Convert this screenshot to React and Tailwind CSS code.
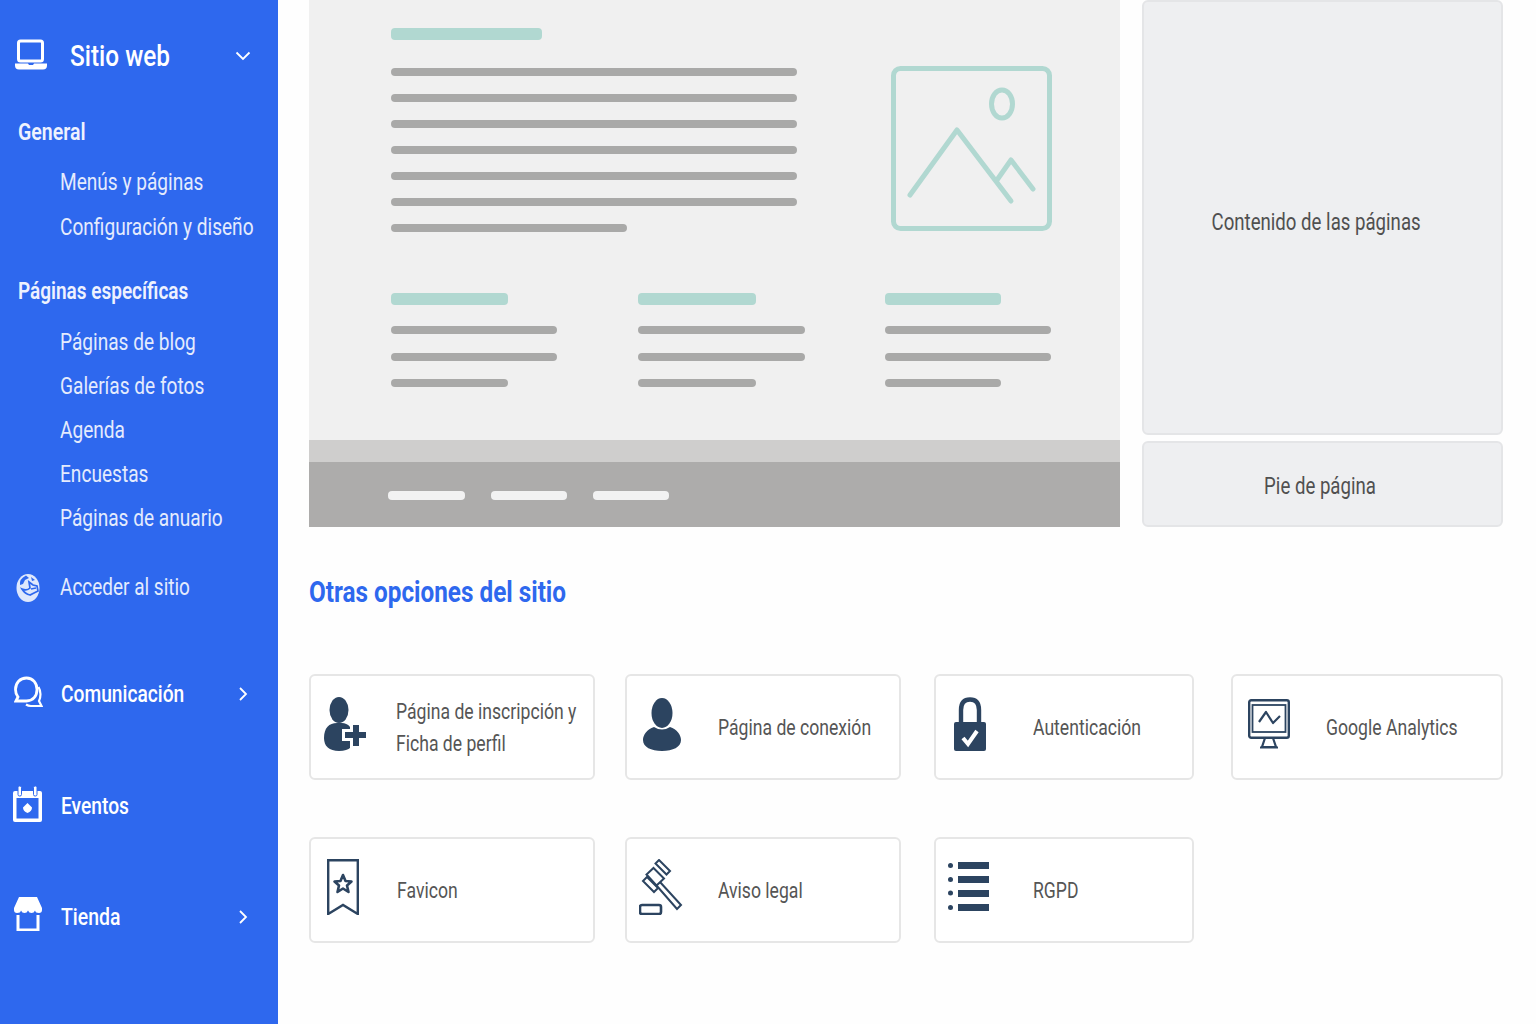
import React from "react";

const NAVY = "#2c4460";

// The reference text is a narrow Roboto, so every label gets squeezed horizontally
const Narrow = ({ className = "scale-x-[0.83]", children }) => (
  <span className={`inline-block whitespace-nowrap origin-left ${className}`}>{children}</span>
);

const ChevronDown = () => (
  <svg width="16" height="16" viewBox="0 0 16 16" fill="none" stroke="white" strokeWidth="1.8">
    <path d="M1.5 4.5 L8 11 L14.5 4.5" />
  </svg>
);

const ChevronRight = () => (
  <svg className="ml-[2px]" width="16" height="16" viewBox="0 0 16 16" fill="none" stroke="white" strokeWidth="1.8">
    <path d="M5 2 L11 8 L5 14" />
  </svg>
);

const LaptopIcon = () => (
  <svg className="mb-[2px]" width="32" height="32" viewBox="0 0 32 32" fill="none">
    <rect x="3.5" y="2" width="24" height="20" rx="2" stroke="white" strokeWidth="3" />
    <path d="M0 24.5 H13 L14 26 H18 L19 24.5 H32 V26.5 Q32 30.5 28 30.5 H4 Q0 30.5 0 26.5 Z" fill="white" />
  </svg>
);

const GlobeIcon = () => (
  <svg width="24" height="30" viewBox="0 0 24 30">
    <ellipse cx="12" cy="15" rx="11.5" ry="14" fill="#dfe8fc" />
    <path d="M10 2.5 L13 5 L9 7 L7 11 L4 12 Q3 6 10 2.5 Z" fill="#2e68ee" />
    <path d="M15 4 L19 7 L16 8 Z" fill="#2e68ee" />
    <path d="M13 9 L17 12 L21 13 L22 18 L18 20 L14 22 Q9 21 6 16 Q11 18 14 15 Z" fill="none" stroke="#2e68ee" strokeWidth="1.7" />
    <path d="M15 16 L20 15" stroke="#2e68ee" strokeWidth="1.5" />
  </svg>
);

const ChatIcon = () => (
  <svg className="mb-[4px]" width="29" height="32" viewBox="0 0 29 32" fill="none" stroke="white" strokeWidth="2.8">
    <path d="M12.5 2 C19 2 23 7 23 13.5 C23 20 19 25 12.5 25 H2 L4 21 C2 18.5 1.5 16 1.5 13.5 C1.5 7 6 2 12.5 2 Z" />
    <path d="M24.5 11 C27 15 27 21 25 25 L27.5 30 H17 C15 30 13.5 29.5 12 28.5" strokeWidth="2.2" />
  </svg>
);

const CalendarIcon = () => (
  <svg className="mb-[4px]" width="29" height="36" viewBox="0 0 29 36">
    <path d="M2 5 H27 Q29 5 29 7 V34 Q29 36 27 36 H2 Q0 36 0 34 V7 Q0 5 2 5 Z" fill="white" />
    <rect x="3.5" y="12" width="22" height="20.5" fill="#2e68ee" />
    <rect x="5" y="0" width="3.5" height="10" rx="1.5" fill="white" stroke="#2e68ee" strokeWidth="1" />
    <rect x="20.5" y="0" width="3.5" height="10" rx="1.5" fill="white" stroke="#2e68ee" strokeWidth="1" />
    <path d="M14.5 17 L19 21.5 Q19 25 14.5 27 Q10 25 10 21.5 Z" fill="white" />
  </svg>
);

const StoreIcon = () => (
  <svg className="mb-[6px]" width="28" height="34" viewBox="0 0 28 34">
    <path d="M5 0 H23 L28 11 V13 Q28 16 25 16 Q21.5 16 21 13.5 Q20 16 17.5 16 Q15 16 14 13.5 Q13 16 10.5 16 Q8 16 7 13.5 Q6.5 16 3 16 Q0 16 0 13 V11 Z" fill="white" />
    <path d="M4 18 V33 H24 V18" fill="none" stroke="white" strokeWidth="3" />
  </svg>
);

const UserPlusIcon = () => (
  <svg className="block" width="44" height="56" viewBox="0 0 44 56">
    <ellipse cx="16" cy="14" rx="9.5" ry="13" fill={NAVY} />
    <path d="M1 42 C1 32 6 27 14 27 H19 C25 27 30 32 31 42 C31 50 27 55 16 55 C6 55 1 50 1 42 Z" fill={NAVY} />
    <path d="M27 26 H38 V33 H44 V44 H38 V54 H27 V45 H19 V33 H27 Z" fill="white" />
    <path d="M30 29 H36 V36 H43 V42 H36 V50 H30 V42 H22 V36 H30 Z" fill={NAVY} />
  </svg>
);

const UserIcon = () => (
  <svg className="block" width="40" height="55" viewBox="0 0 40 55">
    <ellipse cx="20" cy="16" rx="10.5" ry="15" fill={NAVY} />
    <path d="M12 30 Q20 35 28 30 C35 32 39 38 39 43 C39 50 31 54 20 54 C9 54 1 50 1 43 C1 38 5 32 12 30 Z" fill={NAVY} />
  </svg>
);

const LockIcon = () => (
  <svg className="block" width="32" height="55" viewBox="0 0 32 55">
    <path d="M7 26 V13 C7 6 10 2.5 16 2.5 C22 2.5 25 6 25 13 V26" fill="none" stroke={NAVY} strokeWidth="4.4" />
    <rect x="0" y="25" width="32" height="29" rx="2" fill={NAVY} />
    <path d="M9 41 L14 47 L23 34" fill="none" stroke="white" strokeWidth="4" />
  </svg>
);

const MonitorIcon = () => (
  <svg className="block" width="42" height="50" viewBox="0 0 42 50" fill="none" stroke={NAVY}>
    <rect x="1.2" y="1.2" width="39.6" height="37.6" rx="2" strokeWidth="2.4" />
    <rect x="4.5" y="6" width="33" height="27" strokeWidth="1.8" />
    <path d="M11 23 L18 13 L25 24 L32 17" strokeWidth="2.2" strokeLinejoin="round" />
    <path d="M17 39 L14 48 H28 L25 39 M12 48.5 H30" strokeWidth="2.2" />
  </svg>
);

const BookmarkIcon = () => (
  <svg className="block" width="32" height="56" viewBox="0 0 32 56" fill="none" stroke={NAVY}>
    <path d="M1.2 55 V1.2 H30.8 V55 L16 46 Z" strokeWidth="2.4" />
    <path d="M16 16 L18.5 22 L24.5 22.5 L20 26.5 L21.5 33 L16 29.5 L10.5 33 L12 26.5 L7.5 22.5 L13.5 22 Z" strokeWidth="2.6" strokeLinejoin="round" />
  </svg>
);

const GavelIcon = () => (
  <svg className="block" width="44" height="56" viewBox="0 0 44 56" fill="none" stroke={NAVY} strokeWidth="2">
    <path d="M20 1 L31 12 L27.5 15.5 L16.5 4.5 Z" />
    <path d="M8 18 L19 29 L15 33 L4 22 Z" />
    <path d="M14.5 9 L25 19.5 L17.5 26.5 L7.5 15.5 Z" />
    <path d="M21 23 L42 46 L38 50 L17.5 26.5" />
    <rect x="1" y="46" width="21" height="9" rx="2" strokeWidth="2.6" />
  </svg>
);

const ListIcon = () => (
  <svg className="block" width="41" height="50" viewBox="0 0 41 50" fill={NAVY}>
    <circle cx="2.5" cy="3.5" r="2.5" />
    <rect x="10" y="0" width="31" height="7" />
    <circle cx="2.5" cy="17.5" r="2.5" />
    <rect x="10" y="14" width="31" height="7" />
    <circle cx="2.5" cy="31" r="2.5" />
    <rect x="10" y="28" width="31" height="7" />
    <circle cx="2.5" cy="45.5" r="2.5" />
    <rect x="10" y="42" width="31" height="7" />
  </svg>
);

const ImageIcon = () => (
  <svg className="block" width="161" height="165" viewBox="0 0 161 165" fill="none" stroke="#b1d8d1" strokeWidth="5" strokeLinecap="round" strokeLinejoin="round">
    <rect x="2.5" y="2.5" width="156" height="160" rx="7" />
    <ellipse cx="111" cy="38" rx="10.5" ry="14" />
    <path d="M19 129 L66 64 L120 135" />
    <path d="M106 114 L120 94 L142 123" />
  </svg>
);

const sideItem = "flex items-center text-[23px] text-[#e4ebfd]";

const Sidebar = () => (
  <aside className="w-[278px] shrink-0 h-full bg-[#2e68ee] text-white pt-[28px] font-['Roboto',sans-serif] overflow-hidden">
    <div className="flex items-center justify-between h-[56px] pl-[15px] pr-[27px]">
      <div className="flex items-center">
        <LaptopIcon />
        <Narrow className="ml-[23px] mt-[2px] text-[29px] font-medium scale-x-[0.84]">Sitio web</Narrow>
      </div>
      <ChevronDown />
    </div>

    <div className="mt-[33px] h-[32px] flex items-center pl-[18px] text-[23px] font-semibold text-[#eef2fe]">
      <Narrow className="scale-x-[0.85]">General</Narrow>
    </div>
    <div className="mt-[12px] pl-[60px]">
      <div className={`${sideItem} h-[45px]`}><Narrow>Menús y páginas</Narrow></div>
      <div className={`${sideItem} h-[45px]`}><Narrow>Configuración y diseño</Narrow></div>
    </div>

    <div className="mt-[25px] h-[32px] flex items-center pl-[18px] text-[23px] font-semibold text-[#eef2fe]">
      <Narrow className="scale-x-[0.825]">Páginas específicas</Narrow>
    </div>
    <div className="mt-[13px] pl-[60px]">
      <div className={`${sideItem} h-[44px]`}><Narrow>Páginas de blog</Narrow></div>
      <div className={`${sideItem} h-[44px]`}><Narrow>Galerías de fotos</Narrow></div>
      <div className={`${sideItem} h-[44px]`}><Narrow>Agenda</Narrow></div>
      <div className={`${sideItem} h-[44px]`}><Narrow>Encuestas</Narrow></div>
      <div className={`${sideItem} h-[44px]`}><Narrow>Páginas de anuario</Narrow></div>
    </div>

    <div className={`${sideItem} h-[44px] mt-[25px] pl-[16px]`}>
      <GlobeIcon />
      <Narrow className="ml-[20px] scale-x-[0.825]">Acceder al sitio</Narrow>
    </div>

    <div className="mt-[62px] h-[44px] flex items-center justify-between pl-[14px] pr-[27px]">
      <div className="flex items-center">
        <ChatIcon />
        <Narrow className="ml-[18px] text-[24px] font-medium scale-x-[0.8]">Comunicación</Narrow>
      </div>
      <ChevronRight />
    </div>

    <div className="mt-[68px] h-[44px] flex items-center pl-[13px]">
      <CalendarIcon />
      <Narrow className="ml-[19px] text-[24px] font-medium scale-x-[0.8]">Eventos</Narrow>
    </div>

    <div className="mt-[67px] h-[44px] flex items-center justify-between pl-[14px] pr-[27px]">
      <div className="flex items-center">
        <StoreIcon />
        <Narrow className="ml-[19px] text-[24px] font-medium scale-x-[0.81]">Tienda</Narrow>
      </div>
      <ChevronRight />
    </div>
  </aside>
);

const Bar = ({ className }) => <div className={`h-[8px] rounded-full bg-[#a9a9a8] ${className}`} />;
const Accent = ({ className }) => <div className={`h-[12px] rounded-sm bg-[#b1d8d1] ${className}`} />;

const ColumnPreview = ({ head, line, short, className = "" }) => (
  <div className={className}>
    <Accent className={head} />
    <Bar className={`mt-[21px] ${line}`} />
    <Bar className={`mt-[19px] ${line}`} />
    <Bar className={`mt-[18px] ${short}`} />
  </div>
);

const PagePreview = () => (
  <div className="w-[811px] h-[527px] flex flex-col bg-[#f0f0f0]">
    <div className="flex-1 pt-[28px] pl-[82px]">
      <div className="flex">
        <div className="w-[406px]">
          <Accent className="w-[151px]" />
          <div className="mt-[28px] flex flex-col gap-[18px]">
            <Bar className="w-[406px]" />
            <Bar className="w-[406px]" />
            <Bar className="w-[406px]" />
            <Bar className="w-[406px]" />
            <Bar className="w-[406px]" />
            <Bar className="w-[406px]" />
            <Bar className="w-[236px]" />
          </div>
        </div>
        <div className="ml-[94px] mt-[38px]">
          <ImageIcon />
        </div>
      </div>
      <div className="mt-[61px] flex">
        <ColumnPreview head="w-[117px]" line="w-[166px]" short="w-[117px]" className="w-[247px]" />
        <ColumnPreview head="w-[118px]" line="w-[167px]" short="w-[118px]" className="w-[247px]" />
        <ColumnPreview head="w-[116px]" line="w-[166px]" short="w-[116px]" />
      </div>
    </div>
    <div className="h-[22px] bg-[#cfcecd]" />
    <div className="h-[65px] bg-[#adacab] flex items-center gap-[26px] pl-[79px] pt-[2px]">
      <div className="w-[77px] h-[9px] rounded-sm bg-[#f2f2f2]" />
      <div className="w-[76px] h-[9px] rounded-sm bg-[#f2f2f2]" />
      <div className="w-[76px] h-[9px] rounded-sm bg-[#f2f2f2]" />
    </div>
  </div>
);

const ZoneBox = ({ className, label }) => (
  <div className={`flex items-center justify-center bg-[#eeeff1] border-2 border-[#e4e5e7] rounded-md text-[23px] text-[#505050] ${className}`}>
    <span className="inline-block whitespace-nowrap scale-x-[0.81]">{label}</span>
  </div>
);

const Card = ({ icon, pad, slot, children }) => (
  <div className={`h-[106px] flex items-center border-2 border-[#e6e6e6] rounded-md bg-white ${pad}`}>
    <div className={`shrink-0 mb-[6px] ${slot}`}>{icon}</div>
    <div className="pt-[1px] text-[22px] leading-[32px] text-[#555555]">{children}</div>
  </div>
);

const cardText = "scale-x-[0.8]";

export default function App() {
  return (
    <div className="flex h-screen overflow-hidden bg-[#fefefe] font-['Roboto',sans-serif]">
      <Sidebar />
      <main className="flex-1 pl-[31px] pr-[33px]">
        <div className="flex gap-[22px]">
          <PagePreview />
          <div className="flex-1 flex flex-col gap-[6px] h-[527px]">
            <ZoneBox className="h-[435px] pr-[12px] pt-[12px]" label="Contenido de las páginas" />
            <ZoneBox className="flex-1 pr-[4px] pt-[6px]" label="Pie de página" />
          </div>
        </div>

        <h2 className="mt-[43px] h-[42px] flex items-center text-[30px] font-bold text-[#2e68ee]">
          <Narrow className="scale-x-[0.81]">Otras opciones del sitio</Narrow>
        </h2>

        <div className="mt-[62px] grid grid-cols-[316px_309px_297px_272px] gap-y-[57px]">
          <Card icon={<UserPlusIcon />} pad="w-[286px] pl-[12px]" slot="w-[73px]">
            <Narrow className={cardText}>Página de inscripción y<br />Ficha de perfil</Narrow>
          </Card>
          <Card icon={<UserIcon />} pad="w-[276px] pl-[15px]" slot="w-[76px]"><Narrow className={cardText}>Página de conexión</Narrow></Card>
          <Card icon={<LockIcon />} pad="w-[260px] pl-[18px]" slot="w-[79px]"><Narrow className={cardText}>Autenticación</Narrow></Card>
          <Card icon={<MonitorIcon />} pad="w-[272px] pl-[15px]" slot="w-[78px]"><Narrow className={cardText}>Google Analytics</Narrow></Card>
          <Card icon={<BookmarkIcon />} pad="w-[286px] pl-[16px]" slot="w-[70px]"><Narrow className={cardText}>Favicon</Narrow></Card>
          <Card icon={<GavelIcon />} pad="w-[276px] pl-[12px]" slot="w-[79px]"><Narrow className={cardText}>Aviso legal</Narrow></Card>
          <Card icon={<ListIcon />} pad="w-[260px] pl-[12px]" slot="w-[85px]"><Narrow className={cardText}>RGPD</Narrow></Card>
        </div>
      </main>
    </div>
  );
}
